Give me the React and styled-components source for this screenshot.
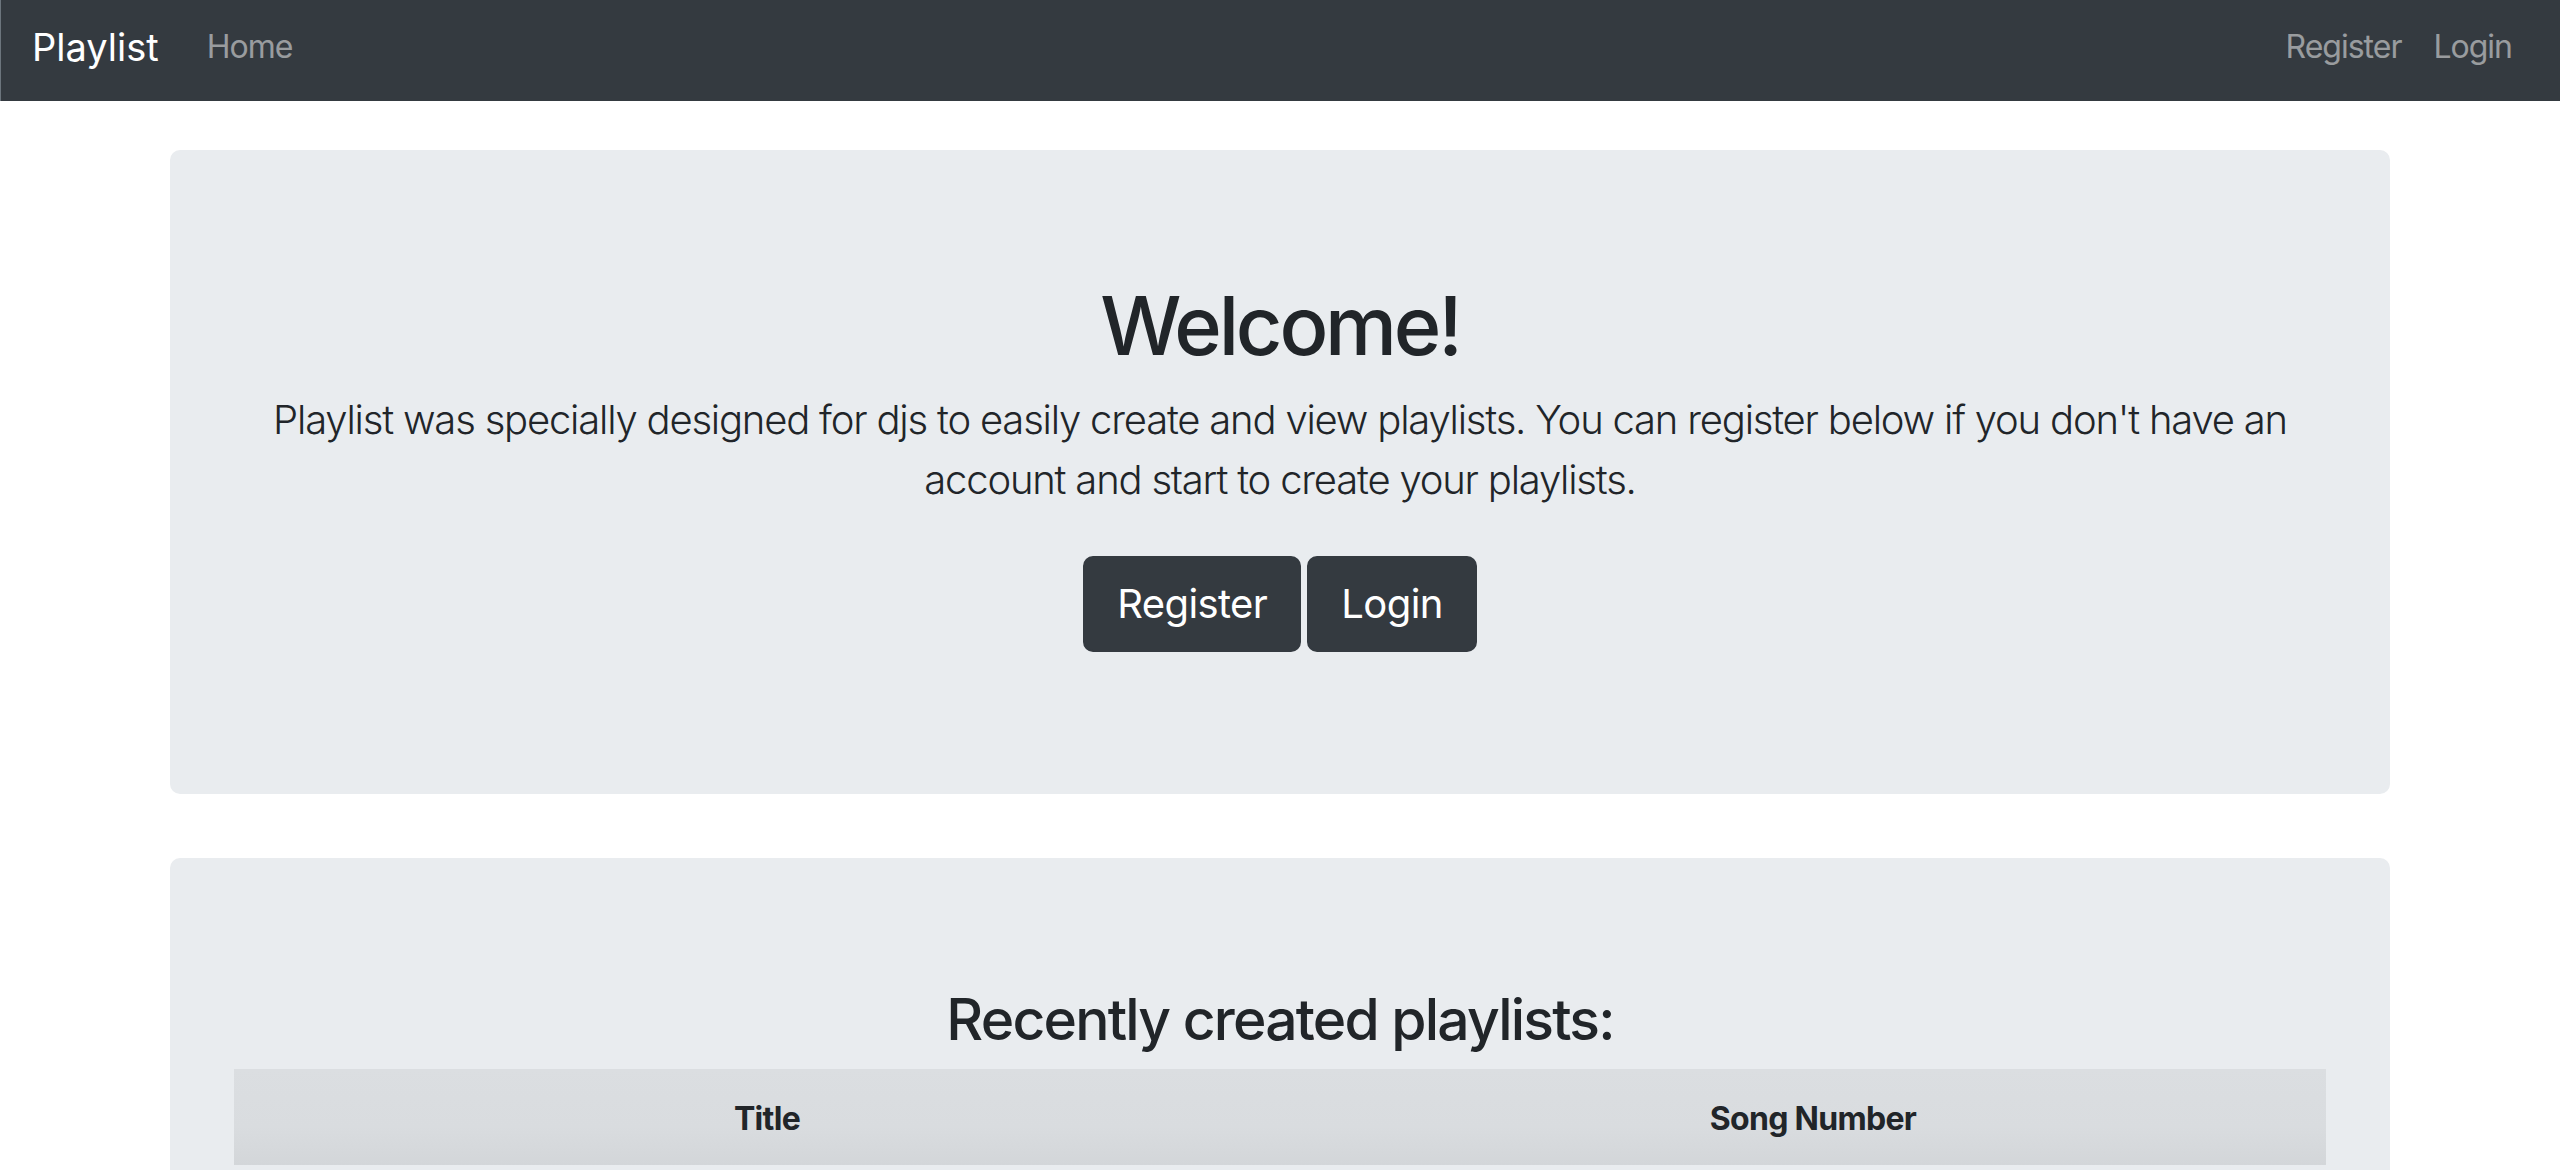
import React from "react";
import styled, { createGlobalStyle } from "styled-components";

const GlobalStyle = createGlobalStyle`
  body {
    margin: 0;
    background: #fff;
    color: #212529;
    font-family: Inter, "Noto Sans", sans-serif;
  }
  * { box-sizing: border-box; }
`;

function App() {
  return (
    <>
      <GlobalStyle />
      <Navbar>
        <Brand href="#">Playlist</Brand>
        <NavLink href="#">Home</NavLink>
        <NavRight>
          <NavLink href="#">Register</NavLink>
          <NavLink href="#">Login</NavLink>
        </NavRight>
      </Navbar>
      <Container>
        <Jumbotron top={49}>
          <Heading>Welcome!</Heading>
          <Lead>
            Playlist was specially designed for djs to easily create and view
            playlists. You can register below if you don't have an account and
            start to create your playlists.
          </Lead>
          <ButtonRow>
            <Button>Register</Button>
            <Button>Login</Button>
          </ButtonRow>
        </Jumbotron>
        <Jumbotron top={64}>
          <SubHeading>Recently created playlists:</SubHeading>
          <Table>
            <thead>
              <tr>
                <Th>Title</Th>
                <Th>Song Number</Th>
              </tr>
            </thead>
          </Table>
        </Jumbotron>
      </Container>
    </>
  );
}

const Navbar = styled.nav`
  height: 101px;
  display: flex;
  align-items: center;
  padding: 0 32px 8px 31px;
  background: #343a40;
  border-left: 1px solid #6c757d;
`;

const Brand = styled.a`
  color: #fff;
  font-size: 38px;
  text-decoration: none;
  margin-right: 32px;
  line-height: 60px;
`;

const NavLink = styled.a`
  color: rgba(255, 255, 255, 0.5);
  font-size: 32px;
  padding: 0 16px;
  text-decoration: none;
  line-height: 48px;
  letter-spacing: -1px;
`;

const NavRight = styled.div`
  margin-left: auto;
  display: flex;
`;

const Container = styled.main`
  width: 2220px;
  margin: 0 auto;
`;

const Jumbotron = styled.section`
  margin-top: ${({ top }) => top}px;
  padding: 128px 64px;
  background: #e9ecef;
  border-radius: 10px;
  text-align: center;
`;

const Heading = styled.h1`
  margin: 0 0 16px;
  font-size: 81px;
  font-weight: 500;
  line-height: 96px;
  letter-spacing: -3.2px;
`;

const Lead = styled.p`
  margin: 0 0 32px;
  font-size: 40px;
  font-weight: 300;
  line-height: 60px;
  letter-spacing: -1.2px;
`;

const ButtonRow = styled.div`
  display: flex;
  justify-content: center;
  gap: 6px;
  padding: 14px 0;
`;

const Button = styled.button`
  font-family: inherit;
  font-size: 40px;
  line-height: 60px;
  padding: 16px 32px;
  letter-spacing: -0.6px;
  color: #fff;
  background: #343a40;
  border: 2px solid #343a40;
  border-radius: 10px;
`;

const SubHeading = styled.h3`
  margin: 0 0 16px;
  font-size: 57px;
  font-weight: 500;
  line-height: 67px;
  letter-spacing: -1.8px;
`;

const Table = styled.table`
  width: 100%;
  border-collapse: collapse;
  background: linear-gradient(#dbdee1, #d9dcdf 60%, #d3d6d9);
`;

const Th = styled.th`
  width: 50%;
  padding: 26px 24px 22px 44px;
  font-size: 32px;
  font-weight: 700;
  line-height: 48px;
  letter-spacing: -0.7px;
  text-align: center;
`;

export default App;
